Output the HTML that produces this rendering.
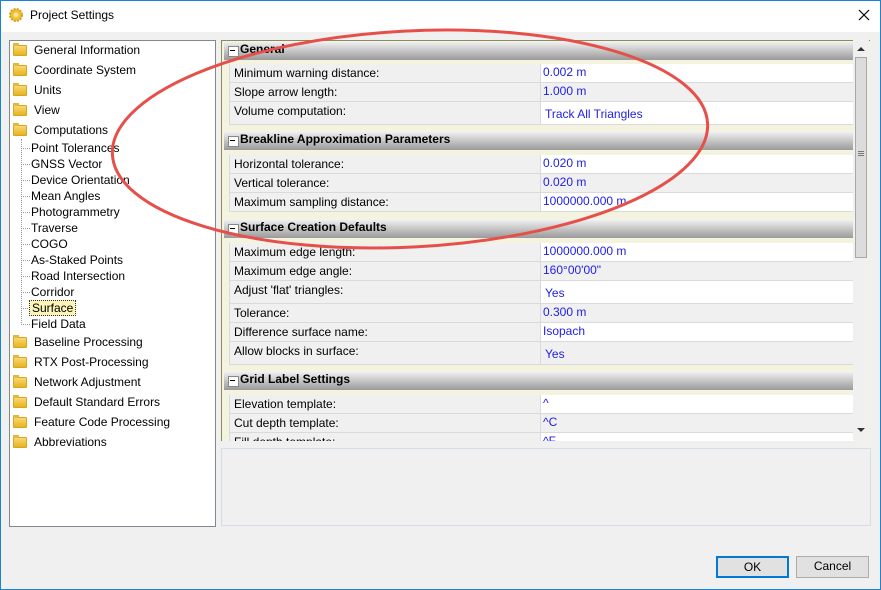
<!DOCTYPE html>
<html><head><meta charset="utf-8"><style>
*{margin:0;padding:0;box-sizing:border-box}
body{width:881px;height:590px;overflow:hidden;font-family:"Liberation Sans",sans-serif;font-size:12px;color:#000;background:#fff;position:relative}
.win{position:absolute;left:0;top:0;width:881px;height:590px;background:#f0f0f0}
.frame{position:absolute;left:0;top:0;width:881px;height:590px;border:1px solid #1883d7;pointer-events:none}
.title{position:absolute;left:0;top:0;width:881px;height:32px;background:#fff}
.a{position:absolute;white-space:nowrap}
.tree{position:absolute;left:9px;top:40px;width:207px;height:487px;background:#fff;border:1px solid #828790}
.fold{position:absolute;width:14px;height:11px;background:linear-gradient(#f8d774,#e8b420);border:1px solid #d9a51c;border-radius:1px}
.fold:before{content:"";position:absolute;left:-1px;top:-3px;width:6px;height:3px;background:#e6b83a}
.t1{position:absolute;left:24px;font-size:12px}
.t2{position:absolute;left:21px;font-size:12px}
.dot{position:absolute;left:11px;width:9px;border-top:1px dotted #999}
.grid{position:absolute;left:221px;top:40px;width:649px;height:401px;background:#f4f3df;border-top:1px solid #8b8b55;border-left:1px solid #8b8b55;overflow:hidden}
.hd{position:absolute;left:2px;width:630px;height:19px;background:linear-gradient(#f4f4f4,#d0d0d0 40%,#9a9a9a);font-weight:bold;font-size:12px;line-height:17px;padding-left:16px}
.hd:before{content:"";position:absolute;left:4px;top:5px;width:9px;height:9px;background:#fff;border:1px solid #888}
.hd:after{content:"";position:absolute;left:6px;top:9px;width:5px;height:1px;background:#000}
.r{position:absolute;left:7px;width:625px;border-bottom:1px solid #dadada;background:#f0f0f0}
.r .l{position:absolute;left:0;top:0;bottom:0;width:312px;padding-left:4px;border-left:1px solid #dadada;line-height:18px}
.r .v{position:absolute;left:311px;top:0;bottom:0;right:0;border-left:1px solid #dadada;padding-left:2px;color:#2020e8;line-height:17px}
.w{background:#fff}
.sb{position:absolute;left:853px;top:40px;width:16px;height:400px;background:#f0f0f0}
.desc{position:absolute;left:221px;top:448px;width:650px;height:78px;border:1px solid #d5dde6;background:#f0f0f0}
.btn{position:absolute;height:22px;background:#e1e1e1;border:1px solid #adadad;text-align:center;line-height:19px}
</style></head><body><div class="win">
<div class="title">
<svg class="a" style="left:9px;top:8px" width="14" height="14" viewBox="0 0 14 14"><circle cx="7" cy="7" r="6" fill="#f0c030"/><circle cx="7" cy="7" r="6" fill="none" stroke="#d8a020" stroke-dasharray="2 1.2" stroke-width="2"/><circle cx="7" cy="7" r="2.5" fill="#fbe8a0"/></svg>
<div class="a" style="left:30px;top:8px;font-size:12px">Project Settings</div>
<svg class="a" style="left:858px;top:9px" width="12" height="12"><path d="M1 1L11 11M11 1L1 11" stroke="#000" stroke-width="1.2"/></svg>
</div>

<div class="tree">
<div class="fold" style="left:3px;top:4px"></div><div class="t1" style="top:2px">General Information</div>
<div class="fold" style="left:3px;top:24px"></div><div class="t1" style="top:22px">Coordinate System</div>
<div class="fold" style="left:3px;top:44px"></div><div class="t1" style="top:42px">Units</div>
<div class="fold" style="left:3px;top:64px"></div><div class="t1" style="top:62px">View</div>
<div class="fold" style="left:3px;top:84px"></div><div class="t1" style="top:82px">Computations</div>
<div style="position:absolute;left:11px;top:98px;height:186px;border-left:1px dotted #999"></div>
<div class="dot" style="top:107px"></div><div class="t2" style="top:100px">Point Tolerances</div>
<div class="dot" style="top:123px"></div><div class="t2" style="top:116px">GNSS Vector</div>
<div class="dot" style="top:139px"></div><div class="t2" style="top:132px">Device Orientation</div>
<div class="dot" style="top:155px"></div><div class="t2" style="top:148px">Mean Angles</div>
<div class="dot" style="top:171px"></div><div class="t2" style="top:164px">Photogrammetry</div>
<div class="dot" style="top:187px"></div><div class="t2" style="top:180px">Traverse</div>
<div class="dot" style="top:203px"></div><div class="t2" style="top:196px">COGO</div>
<div class="dot" style="top:219px"></div><div class="t2" style="top:212px">As-Staked Points</div>
<div class="dot" style="top:235px"></div><div class="t2" style="top:228px">Road Intersection</div>
<div class="dot" style="top:251px"></div><div class="t2" style="top:244px">Corridor</div>
<div class="dot" style="top:267px"></div><div class="t2" style="top:259px;left:19px;padding:0 2px;background:#fcf3b8;border:1px dotted #333">Surface</div>
<div class="dot" style="top:283px"></div><div class="t2" style="top:276px">Field Data</div>
<div class="fold" style="left:3px;top:296px"></div><div class="t1" style="top:294px">Baseline Processing</div>
<div class="fold" style="left:3px;top:316px"></div><div class="t1" style="top:314px">RTX Post-Processing</div>
<div class="fold" style="left:3px;top:336px"></div><div class="t1" style="top:334px">Network Adjustment</div>
<div class="fold" style="left:3px;top:356px"></div><div class="t1" style="top:354px">Default Standard Errors</div>
<div class="fold" style="left:3px;top:376px"></div><div class="t1" style="top:374px">Feature Code Processing</div>
<div class="fold" style="left:3px;top:396px"></div><div class="t1" style="top:394px">Abbreviations</div>
</div>

<div class="grid">
<div class="hd" style="top:0">General</div>
<div class="r" style="top:23px;height:19px"><div class="l">Minimum warning distance:</div><div class="v w">0.002 m</div></div>
<div class="r" style="top:42px;height:19px"><div class="l">Slope arrow length:</div><div class="v">1.000 m</div></div>
<div class="r" style="top:61px;height:23px"><div class="l">Volume computation:</div><div class="v w" style="line-height:24px;padding-left:4px">Track All Triangles</div></div>
<div class="hd" style="top:90px">Breakline Approximation Parameters</div>
<div class="r" style="top:114px;height:19px"><div class="l">Horizontal tolerance:</div><div class="v w">0.020 m</div></div>
<div class="r" style="top:133px;height:19px"><div class="l">Vertical tolerance:</div><div class="v">0.020 m</div></div>
<div class="r" style="top:152px;height:19px"><div class="l">Maximum sampling distance:</div><div class="v w">1000000.000 m</div></div>
<div class="hd" style="top:178px">Surface Creation Defaults</div>
<div class="r" style="top:202px;height:19px"><div class="l">Maximum edge length:</div><div class="v w">1000000.000 m</div></div>
<div class="r" style="top:221px;height:19px"><div class="l">Maximum edge angle:</div><div class="v">160°00'00"</div></div>
<div class="r" style="top:240px;height:23px"><div class="l">Adjust 'flat' triangles:</div><div class="v w" style="line-height:24px;padding-left:4px">Yes</div></div>
<div class="r" style="top:263px;height:19px"><div class="l">Tolerance:</div><div class="v">0.300 m</div></div>
<div class="r" style="top:282px;height:19px"><div class="l">Difference surface name:</div><div class="v w">Isopach</div></div>
<div class="r" style="top:301px;height:23px"><div class="l">Allow blocks in surface:</div><div class="v" style="line-height:24px;padding-left:4px">Yes</div></div>
<div class="hd" style="top:330px">Grid Label Settings</div>
<div class="r" style="top:354px;height:19px"><div class="l">Elevation template:</div><div class="v w">^</div></div>
<div class="r" style="top:373px;height:19px"><div class="l">Cut depth template:</div><div class="v">^C</div></div>
<div class="r" style="top:392px;height:19px"><div class="l">Fill depth template:</div><div class="v w">^F</div></div>
</div>
<div class="sb">
<svg class="a" style="left:4px;top:7px" width="8" height="5"><path d="M0 4L4 0L8 4Z" fill="#333"/></svg>
<div class="a" style="left:2px;top:17px;width:12px;height:201px;background:#dcdcdc;border:1px solid #a8a8a8"></div>
<div class="a" style="left:5px;top:111px;width:6px;height:5px;border-top:1px solid #777;border-bottom:1px solid #777"></div>
<div class="a" style="left:5px;top:113px;width:6px;height:1px;background:#777"></div>
<svg class="a" style="left:4px;top:388px" width="8" height="5"><path d="M0 0L4 4L8 0Z" fill="#333"/></svg>
</div>
<div class="desc"></div>
<div class="btn" style="left:716px;top:556px;width:73px;border:2px solid #0078d7">OK</div>
<div class="btn" style="left:796px;top:556px;width:73px">Cancel</div>
</div>
<div class="frame"></div>
<svg class="a" style="left:0;top:0" width="881" height="590"><ellipse cx="410" cy="139" rx="298" ry="108" transform="rotate(-3 410 139)" fill="none" stroke="#e5504a" stroke-width="3"/></svg>
</body></html>
